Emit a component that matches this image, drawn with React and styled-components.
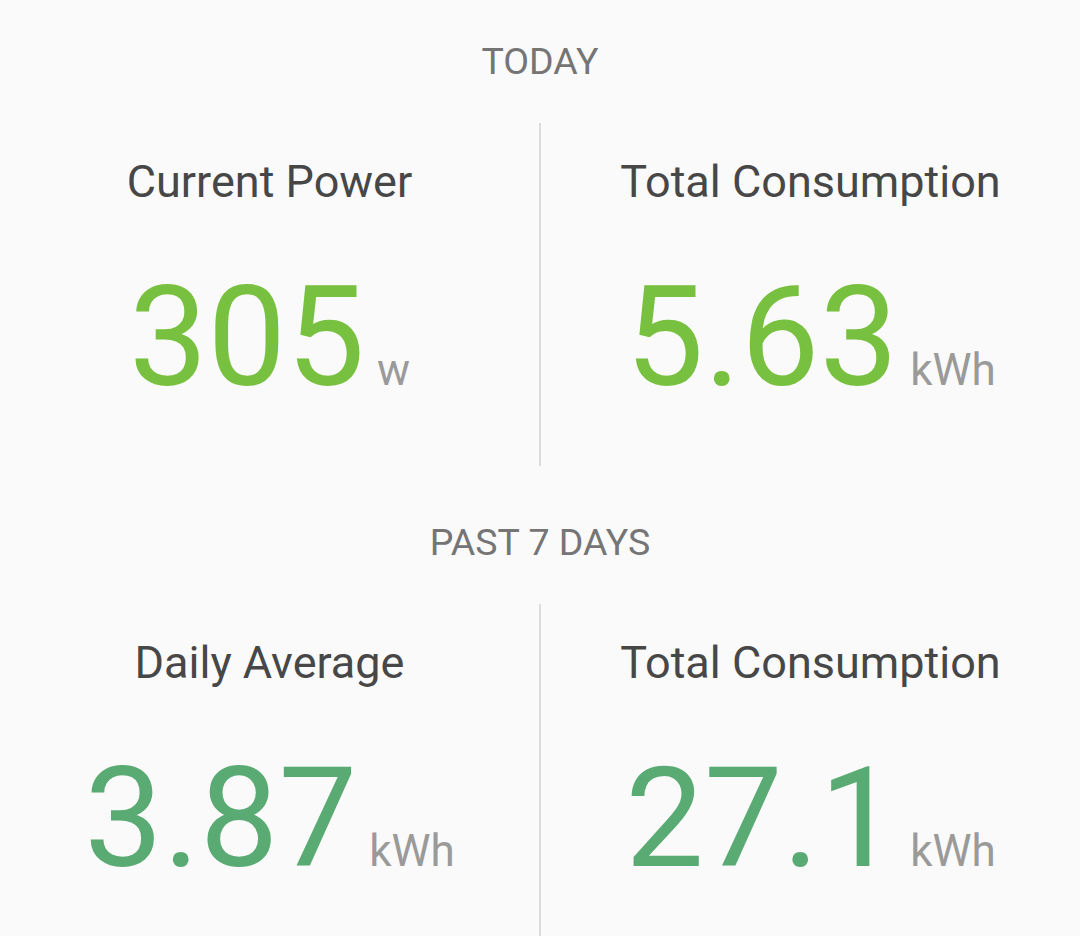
import React from "react";
import styled, { createGlobalStyle } from "styled-components";

const GlobalStyle = createGlobalStyle`
    html, body {
        margin: 0;
        padding: 0;
        background: #fafafa;
    }
    body {
        font-family: Roboto, "Noto Sans", "Liberation Sans", sans-serif;
    }
`;

const sections = [
    {
        title: "TODAY",
        color: "#78c140",
        stats: [
            { label: "Current Power", value: "305", unit: "w" },
            { label: "Total Consumption", value: "5.63", unit: "kWh" },
        ],
    },
    {
        title: "PAST 7 DAYS",
        color: "#5aaa73",
        stats: [
            { label: "Daily Average", value: "3.87", unit: "kWh" },
            { label: "Total Consumption", value: "27.1", unit: "kWh" },
        ],
    },
];

const Stat = ({ label, value, unit, color }) => (
    <Column>
        <Label>{label}</Label>
        <ValueRow>
            <Value color={color}>{value}</Value>
            <Unit>{unit}</Unit>
        </ValueRow>
    </Column>
);

const App = () => {
    return (
        <Page>
            <GlobalStyle />
            {sections.map((s) => (
                <Section key={s.title}>
                    <Header>{s.title}</Header>
                    <Grid>
                        <Stat {...s.stats[0]} color={s.color} />
                        <Divider />
                        <Stat {...s.stats[1]} color={s.color} />
                    </Grid>
                </Section>
            ))}
        </Page>
    );
};

const Page = styled.div`
    width: 1080px;
    height: 936px;
    overflow: hidden;
    background: #fafafa;
    padding-top: 39px;
    box-sizing: border-box;
`;

const Section = styled.section`
    display: flex;
    flex-direction: column;
    margin-bottom: 54px;
`;

const Header = styled.div`
    font-size: 37.5px;
    line-height: 44px;
    height: 44px;
    text-align: center;
    color: #757575;
    margin-bottom: 40px;
`;

const Grid = styled.div`
    display: grid;
    grid-template-columns: 1fr 2px 1fr;
    height: 343px;
`;

const Divider = styled.div`
    background: #dcdcdc;
`;

const Column = styled.div`
    display: flex;
    flex-direction: column;
    align-items: center;
    padding-top: 33px;
`;

const Label = styled.div`
    font-size: 45px;
    line-height: 52px;
    color: #474747;
    margin-bottom: 59px;
`;

const ValueRow = styled.div`
    display: flex;
    align-items: baseline;
    justify-content: center;
    gap: 12px;
`;

const Value = styled.span`
    font-size: 140px;
    line-height: 140px;
    color: ${(p) => p.color};
`;

const Unit = styled.span`
    font-size: 44px;
    color: #9a9a9a;
`;

export default App;
